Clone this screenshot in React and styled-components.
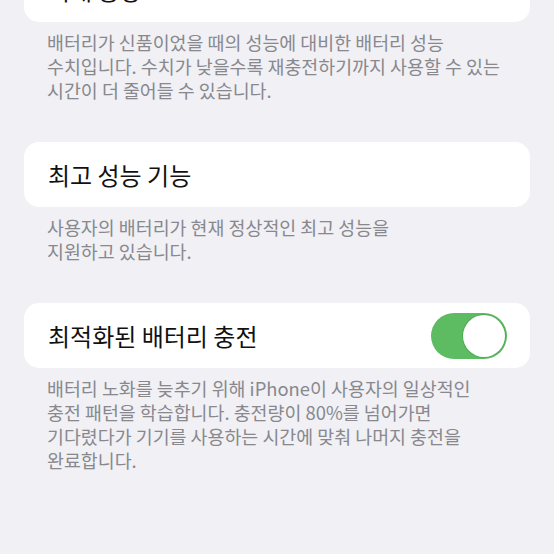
import React from "react";
import styled, { createGlobalStyle } from "styled-components";

const Global = createGlobalStyle`
  html, body {
    margin: 0;
    padding: 0;
    background: #f0f0f5;
  }
  body {
    font-family: "Noto Sans CJK KR", "Noto Sans", sans-serif;
    -webkit-font-smoothing: antialiased;
  }
`;

const Screen = styled.div`
  width: 554px;
  height: 554px;
  overflow: hidden;
  background: #f0f0f5;
`;

/* the settings list, scrolled so the first group is partly above the top */
const List = styled.div`
  display: flex;
  flex-direction: column;
  margin-top: -43px;
  padding: 0 24px;
`;

const Section = styled.section`
  display: flex;
  flex-direction: column;
  margin-bottom: ${(p) => p.$gap || 40}px;
`;

const Card = styled.div`
  height: 65px;
  background: #ffffff;
  border-radius: 15px;
  display: flex;
  align-items: center;
  justify-content: space-between;
  padding: 0 23px 0 24px;
`;

const Title = styled.span`
  font-size: 24px;
  color: #111111;
`;

const Value = styled.span`
  font-size: 24px;
  color: #8a8a8e;
`;

const Footer = styled.p`
  margin: 8px 0 0;
  padding: 0 23px;
  font-size: 18.4px;
  line-height: 24px;
  color: #88888d;
`;

const Toggle = styled.div`
  width: 76px;
  height: 46px;
  border-radius: 23px;
  background: #5dbb61;
  display: flex;
  align-items: center;
  justify-content: ${(p) => (p.$on ? "flex-end" : "flex-start")};
  padding: 2px;
  box-sizing: border-box;
`;

const Knob = styled.div`
  width: 42px;
  height: 42px;
  border-radius: 50%;
  background: #ffffff;
  box-shadow: 0 0 0 1px rgba(60, 140, 64, 0.35);
`;

export default function App() {
  return (
    <Screen>
      <Global />
      <List>
        <Section $gap={40}>
          <Card>
            <Title>최대 용량</Title>
            <Value>86%</Value>
          </Card>
          <Footer>
            배터리가 신품이었을 때의 성능에 대비한 배터리 성능
            <br />
            수치입니다. 수치가 낮을수록 재충전하기까지 사용할 수 있는
            <br />
            시간이 더 줄어들 수 있습니다.
          </Footer>
        </Section>
        <Section $gap={40}>
          <Card>
            <Title>최고 성능 기능</Title>
          </Card>
          <Footer>
            사용자의 배터리가 현재 정상적인 최고 성능을
            <br />
            지원하고 있습니다.
          </Footer>
        </Section>
        <Section>
          <Card>
            <Title>최적화된 배터리 충전</Title>
            <Toggle $on>
              <Knob />
            </Toggle>
          </Card>
          <Footer>
            배터리 노화를 늦추기 위해 iPhone이 사용자의 일상적인
            <br />
            충전 패턴을 학습합니다. 충전량이 80%를 넘어가면
            <br />
            기다렸다가 기기를 사용하는 시간에 맞춰 나머지 충전을
            <br />
            완료합니다.
          </Footer>
        </Section>
      </List>
    </Screen>
  );
}
